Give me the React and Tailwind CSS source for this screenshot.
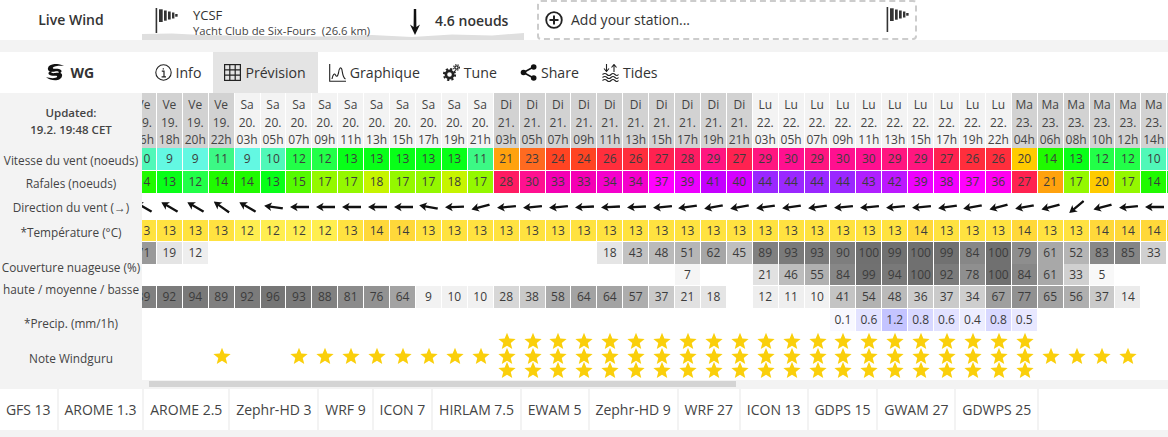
import React from 'react'

// one forecast column per entry, first and last are cut by the scroller
const hours = [
  ['Ve', '19.', '16h'], ['Ve', '19.', '18h'], ['Ve', '19.', '20h'], ['Ve', '19.', '22h'],
  ...['03', '05', '07', '09', '11', '13', '15', '17', '19', '21'].map((h) => ['Sa', '20.', h + 'h']),
  ...['03', '05', '07', '09', '11', '13', '15', '17', '19', '21'].map((h) => ['Di', '21.', h + 'h']),
  ...['03', '05', '07', '09', '11', '13', '15', '17', '19', '22'].map((h) => ['Lu', '22.', h + 'h']),
  ...['04', '06', '08', '10', '12', '14', '16'].map((h) => ['Ma', '23.', h + 'h']),
]

const wind = [10, 9, 9, 11, 9, 10, 12, 12, 13, 13, 13, 13, 13, 11, 21, 23, 24, 24, 26, 26, 27, 28, 29, 27, 29, 30, 29, 30, 30, 29, 29, 27, 26, 26, 20, 14, 13, 12, 12, 10, 9]
const gust = [14, 13, 12, 14, 14, 13, 15, 17, 17, 18, 17, 17, 18, 17, 28, 30, 33, 33, 34, 34, 37, 39, 41, 40, 44, 44, 44, 44, 43, 42, 39, 38, 37, 36, 27, 21, 17, 20, 17, 14, 13]
const arrows = [30, 30, 30, 35, 30, 8, 0, 0, 0, 0, 0, 10, -2, -15, -5, -5, -5, -3, -3, -3, -5, -8, -10, -10, -8, -8, -8, -5, -5, -5, -5, -8, -10, -15, -10, -15, -40, -15, -5, 0, 0]
const temp = [
  13, 13, 13, 13, 12, 12, 12, 12, 13, 14, 14, 13, 13, 13,
  13, 13, 13, 13, 13, 13, 13, 13, 13, 13,
  13, 13, 13, 13, 13, 13, 14, 13, 13, 13,
  14, 13, 13, 14, 14, 14, 14,
]
const _ = null
const cloudHigh = [71, 19, 12, _, _, _, _, _, _, _, _, _, _, _, _, _, _, _, 18, 43, 48, 51, 62, 45, 89, 93, 93, 90, 100, 99, 100, 99, 84, 100, 79, 61, 52, 83, 85, 33, _]
const cloudMid = [_, _, _, _, _, _, _, _, _, _, _, _, _, _, _, _, _, _, _, _, _, 7, _, _, 21, 46, 55, 84, 99, 94, 100, 92, 78, 100, 84, 61, 33, 5, _, _, _]
const cloudLow = [89, 92, 94, 89, 92, 96, 93, 88, 81, 76, 64, 9, 10, 10, 28, 38, 58, 64, 64, 57, 37, 21, 18, _, 12, 11, 10, 41, 54, 48, 36, 37, 34, 67, 77, 65, 56, 37, 14, _, _]
const precip = [_, _, _, _, _, _, _, _, _, _, _, _, _, _, _, _, _, _, _, _, _, _, _, _, _, _, _, '0.1', '0.6', '1.2', '0.8', '0.6', '0.4', '0.8', '0.5', _, _, _, _, _, _]
const stars = [
  0, 0, 0, 1, 0, 0, 1, 1, 1, 1, 1, 1, 1, 1,
  3, 3, 3, 3, 3, 3, 3, 3, 3, 3,
  3, 3, 3, 3, 3, 3, 3, 3, 3, 3,
  3, 1, 1, 1, 1, 0, 0,
]

const windColors = {
  9: '#63f8e2', 10: '#50f8b8', 11: '#3cf985', 12: '#22ff48', 13: '#08ff18', 14: '#20fa00', 15: '#55fa00',
  17: '#94f800', 18: '#c6f400', 20: '#ffcb00', 21: '#ffa20e', 23: '#ff6a20', 24: '#ff4422', 26: '#ff2e3c',
  27: '#ff2250', 28: '#ff1c62', 29: '#ff1680', 30: '#ff1090', 33: '#f400b4', 34: '#f400cc', 36: '#ff00f0',
  37: '#ff00ff', 38: '#f400ff', 39: '#ee00ff', 40: '#d400ff', 41: '#c400ff', 42: '#bc18ff', 43: '#b020ff', 44: '#9a28ff',
}
const tempColors = { 12: '#ffee50', 13: '#ffe240', 14: '#ffd83a' }
const precipColors = { '0.1': '#f8f8ff', '0.4': '#ecedff', '0.5': '#e8e8ff', '0.6': '#e2e2ff', '0.8': '#d8d8ff', '1.2': '#c4c4ff' }

function cloudColor(v) {
  if (v === null) return '#ffffff'
  const g = Math.round(255 - v * 1.43)
  return `rgb(${g},${g},${g})`
}

const models = ['GFS 13', 'AROME 1.3', 'AROME 2.5', 'Zephr-HD 3', 'WRF 9', 'ICON 7', 'HIRLAM 7.5', 'EWAM 5', 'Zephr-HD 9', 'WRF 27', 'ICON 13', 'GDPS 15', 'GWAM 27', 'GDWPS 25']

function FlagIcon({ className }) {
  return (
    <svg viewBox="0 0 24 26" className={className} fill="#333">
      <rect x="0.6" y="0" width="1.6" height="25" />
      <rect x="4" y="1.3" width="3.7" height="12.7" />
      <rect x="9" y="2.5" width="2.7" height="10.2" />
      <rect x="13" y="3.5" width="2.7" height="8" />
      <rect x="17" y="4.5" width="2.4" height="6" />
      <rect x="20.2" y="6" width="2.4" height="2.7" />
    </svg>
  )
}

function Star() {
  return (
    <svg viewBox="0 0 24 24" className="w-[18px] h-[18px] -my-[1.75px] shrink-0" fill="#facf0b">
      <polygon points="12,1 15.1,8.6 23.5,9.3 17,14.6 19,22.7 12,18.3 5,22.7 7,14.6 0.5,9.3 8.9,8.6" />
    </svg>
  )
}

function Row({ values, color, height }) {
  return (
    <div className={`grid grid-cols-[repeat(41,25.92px)] ${height}`}>
      {values.map((v, i) => (
        <div
          key={i}
          className="flex items-center justify-center border-r border-white text-xs text-[#3c3c3c]"
          style={{ backgroundColor: color(v) }}
        >
          {v}
        </div>
      ))}
    </div>
  )
}

function Tab({ icon, label, active }) {
  return (
    <div className={`flex items-center gap-[4px] h-full pl-[11px] pr-[12px] text-[14.15px] text-[#333] ${active ? 'bg-[#e4e4e4]' : ''}`}>
      {icon}
      <span>{label}</span>
    </div>
  )
}

export default function App() {
  return (
    <div className="w-[1168px] h-[437px] overflow-hidden bg-[#f3f3f3] font-['Open_Sans','Liberation_Sans',sans-serif] text-[#333]">
      {/* live wind */}
      <div className="flex h-10 bg-white">
        <div className="w-[142px] flex items-center justify-center text-sm font-semibold text-[#333]">Live Wind</div>
        <div className="relative w-[382px] h-10 flex">
          <svg viewBox="0 0 382 8" preserveAspectRatio="none" className="absolute left-0 bottom-0 w-full h-2" fill="#dfdfdf">
            <path d="M0 2 L30 1.5 L60 3 L120 4 L180 4.5 L230 3 L270 5 L310 2.5 L350 3.5 L382 1 L382 8 L0 8 Z" />
          </svg>
          <FlagIcon className="relative w-[24px] h-[26px] ml-[13px] mt-[8px]" />
          <div className="relative ml-[14px] mt-[6px] w-[217px]">
            <div className="text-[13px] leading-[18px] text-[#333]">YCSF</div>
            <div className="text-[11.3px] leading-[14px] text-[#444] whitespace-nowrap">Yacht Club de Six-Fours&nbsp; (26.6 km)</div>
          </div>
          <svg viewBox="0 0 12 26" className="relative w-3 h-[26px] mt-[9px] -ml-[1px]" fill="#111">
            <path d="M4.8 0 L7.2 0 L7.4 18 L11 15.5 L6 26 L1 15.5 L4.6 18 Z" />
          </svg>
          <div className="relative ml-[14px] mt-[12px] text-sm leading-[18px] font-semibold whitespace-nowrap">4.6 noeuds</div>
        </div>
        <div className="ml-[13px] w-[380px] h-10 flex items-center border-2 border-dashed border-[#cccccc] rounded-[4px] pl-[6px]">
          <svg viewBox="0 0 18 18" className="w-[18px] h-[18px]" fill="none" stroke="#222" strokeWidth="1.8">
            <circle cx="9" cy="9" r="7.8" />
            <path d="M9 4.5 V13.5 M4.5 9 H13.5" strokeWidth="2" />
          </svg>
          <span className="ml-[8px] text-sm text-[#333]">Add your station...</span>
          <FlagIcon className="w-[24px] h-[26px] ml-auto mr-[5px]" />
        </div>
      </div>

      {/* navigation */}
      <div className="flex h-[41px] mt-3 bg-white">
        <div className="w-[143.5px] shrink-0 flex items-center justify-center gap-[5px] pr-[4px]">
          <svg viewBox="0 0 20 17" className="w-5 h-[17px]" fill="#111">
            <path d="M19 2 C14 -1 4 -1 3 4 C2 8 7 8 10 7.5 C13 7 15 8 13 9.5 C17 9.5 18 6 14 5 C11 4.4 7 5.5 8 3.5 C9 2 15 1.5 19 2 Z" />
            <path d="M1 13 C6 17.5 16 17.5 17 12 C18 8 13 8.5 10 9 C7 9.5 5 8.5 7 7 C3 7 2 10.5 6 11.5 C9 12 13 11 12 13 C11 14.5 5 14.5 1 13 Z" />
          </svg>
          <span className="text-sm font-bold text-[#333]">WG</span>
        </div>
        <div className="flex items-center h-full">
          <Tab
            label="Info"
            icon={
              <svg viewBox="0 0 17 17" className="w-[17px] h-[17px]" fill="none" stroke="#222" strokeWidth="1.1">
                <circle cx="8.5" cy="8.5" r="7.7" />
                <path d="M6.8 7.2 H9 V12.6 M6.6 12.8 H11 M8.3 4.2 V5.6" strokeWidth="1.2" />
              </svg>
            }
          />
          <Tab
            active
            label="Prévision"
            icon={
              <svg viewBox="0 0 17 17" className="w-[17px] h-[17px]" fill="none" stroke="#222" strokeWidth="1.2">
                <rect x="0.6" y="0.6" width="15.8" height="15.8" />
                <path d="M5.8 0.6 V16.4 M11.2 0.6 V16.4 M0.6 5.8 H16.4 M0.6 11.2 H16.4" />
              </svg>
            }
          />
          <Tab
            label="Graphique"
            icon={
              <svg viewBox="0 0 17 18" className="w-[17px] h-[18px]" fill="none" stroke="#222" strokeWidth="1.1">
                <path d="M0.7 0 V17.3 H17" />
                <path d="M3 15 C4 10 5.5 9 6.5 11 C7.5 13 8.5 13 9.5 9 C10 4 12 2 13 6 C13.7 10 14 14 16.5 15" />
              </svg>
            }
          />
          <Tab
            label="Tune"
            icon={
              <svg viewBox="0 0 17 17" className="w-[17px] h-[17px]" fill="none" stroke="#222">
                <circle cx="6.5" cy="10.5" r="3.6" strokeWidth="2.6" />
                <circle cx="6.5" cy="10.5" r="5.6" strokeWidth="2" strokeDasharray="2.2 2.2" />
                <circle cx="13.5" cy="3.5" r="1.6" strokeWidth="1.3" />
                <circle cx="13.5" cy="3.5" r="2.9" strokeWidth="1.1" strokeDasharray="1.2 1.2" />
              </svg>
            }
          />
          <Tab
            label="Share"
            icon={
              <svg viewBox="0 0 17 17" className="w-[17px] h-[17px]" fill="#111" stroke="#111" strokeWidth="1.6">
                <path d="M3.5 8.5 L13.5 3 M3.5 8.5 L13.5 14" fill="none" />
                <circle cx="3.5" cy="8.5" r="2.8" stroke="none" />
                <circle cx="13.7" cy="3" r="2.8" stroke="none" />
                <circle cx="13.7" cy="14" r="2.8" stroke="none" />
              </svg>
            }
          />
          <Tab
            label="Tides"
            icon={
              <svg viewBox="0 0 17 18" className="w-[17px] h-[18px]" fill="none" stroke="#222" strokeWidth="1.1">
                <path d="M4.5 0 V7 M2 4.5 L4.5 7.5 L7 4.5 M12 8 V1 M9.5 3.5 L12 0.5 L14.5 3.5" />
                <path d="M0.5 10.5 Q3 8.5 5 10.5 T9 10.5 T13 10.5 T16.5 10.5 M0.5 13.5 Q3 11.5 5 13.5 T9 13.5 T13 13.5 T16.5 13.5 M0.5 16.5 Q3 14.5 5 16.5 T9 16.5 T13 16.5 T16.5 16.5" />
              </svg>
            }
          />
        </div>
      </div>

      {/* forecast table */}
      <div className="flex h-[296px]">
        <div className="w-[142px] shrink-0 text-[11.8px] text-[#444] text-center whitespace-nowrap">
          <div className="h-[55px] pt-[11px] text-[11.5px] font-semibold leading-[17px]">
            Updated:
            <br />
            19.2. 19:48 CET
          </div>
          <div className="h-[23px] leading-[25px]">Vitesse du vent (noeuds)</div>
          <div className="h-[23px] leading-[24px]">Rafales (noeuds)</div>
          <div className="h-[26px] leading-[26px]">Direction du vent (→)</div>
          <div className="h-[22px] leading-[25px]">*Température (°C)</div>
          <div className="h-[66px] pt-[14px] leading-[22px]">
            Couverture nuageuse (%)
            <br />
            haute / moyenne / basse
          </div>
          <div className="h-[30px] pt-[4px] leading-[22px]">*Precip. (mm/1h)</div>
          <div className="h-[51px] pt-[9px] leading-[22px]">Note Windguru</div>
        </div>
        <div className="flex-1 overflow-hidden">
          <div className="w-[1063px] -ml-[11px] bg-white">
            <div className="grid grid-cols-[repeat(41,25.92px)] h-[55px] border-b border-white">
              {hours.map((h, i) => (
                <div
                  key={i}
                  className={`flex flex-col items-center pt-[3px] border-r border-white text-xs leading-[17.5px] text-[#444] ${h[0] === 'Sa' || h[0] === 'Lu' ? 'bg-[#f3f3f3]' : 'bg-[#d2d2d2]'}`}
                >
                  <span>{h[0]}</span>
                  <span>{h[1]}</span>
                  <span>{h[2]}</span>
                </div>
              ))}
            </div>
            <div className="border-b border-white">
              <Row values={wind} color={(v) => windColors[v]} height="h-[22px]" />
            </div>
            <div className="border-b border-white">
              <Row values={gust} color={(v) => windColors[v]} height="h-[22px]" />
            </div>
            <div className="grid grid-cols-[repeat(41,25.92px)] h-[26px]">
              {arrows.map((a, i) => (
                <div key={i} className="flex items-center justify-center">
                  <svg viewBox="0 0 20 10" className="w-[19px] h-[10px]" fill="#111" style={{ transform: `rotate(${a}deg)` }}>
                    <path d="M0 5 L8 0.5 L6.5 3.8 L20 3.8 L20 6.2 L6.5 6.2 L8 9.5 Z" />
                  </svg>
                </div>
              ))}
            </div>
            <div className="border-b border-white">
              <Row values={temp} color={(v) => tempColors[v]} height="h-[21px]" />
            </div>
            <Row values={cloudHigh} color={cloudColor} height="h-[22px]" />
            <div className="border-b border-white">
              <Row values={cloudMid} color={cloudColor} height="h-[21px]" />
            </div>
            <div className="border-b border-white">
              <Row values={cloudLow} color={cloudColor} height="h-[22px]" />
            </div>
            <Row values={precip} color={(v) => (v === null ? '#ffffff' : precipColors[v])} height="h-[22px]" />
            <div className="grid grid-cols-[repeat(41,25.92px)] h-[49px]">
              {stars.map((n, i) => (
                <div key={i} className="flex flex-col items-center justify-center">
                  {Array.from({ length: n }).map((_, k) => (
                    <Star key={k} />
                  ))}
                </div>
              ))}
            </div>
          </div>
          {/* horizontal scrollbar */}
          <div className="h-[6px] mt-px ml-[7px] w-[587px] bg-[#d4d4d4]" />
        </div>
      </div>

      {/* model tabs */}
      <div className="flex h-[41px] bg-white">
        {models.map((m) => (
          <div key={m} className="flex items-center px-[5.9px] border-r-2 border-[#f3f3f3] text-sm text-[#444] whitespace-nowrap">
            {m}
          </div>
        ))}
      </div>
    </div>
  )
}
